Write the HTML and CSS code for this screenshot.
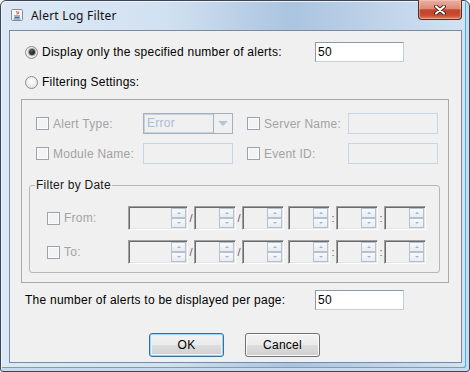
FILE: index.html
```html
<!DOCTYPE html>
<html lang="en">
<head>
<meta charset="UTF-8">
<title>Alert Log Filter</title>
<link rel="stylesheet" href="styles.css">
</head>
<body>
<div class="window">
    <!-- barra de titulo -->
    <div class="titlebar">
        <svg class="app-icon" width="12" height="12" viewBox="0 0 12 12">
            <rect x="0.5" y="0.5" width="11" height="11" rx="1" fill="#f4f4f4" stroke="#8c8c8c"/>
            <path d="M6 2 C5 3 7 4 6 5.5 M7.5 2.5 C7 3.5 8 4 7.3 5" stroke="#d2401f" stroke-width="1" fill="none"/>
            <path d="M3 7 H9 M3.5 8.5 H8.5 M2.5 10 H9.5" stroke="#3d6aa6" stroke-width="1" fill="none"/>
        </svg>
        <span class="title">Alert Log Filter</span>
        <div class="close-btn">
            <svg width="12" height="10" viewBox="0 0 12 10">
                <path d="M2 1.5 L10 8.5 M10 1.5 L2 8.5" stroke="#4b2019" stroke-width="4" stroke-linecap="round"/>
                <path d="M2 1.5 L10 8.5 M10 1.5 L2 8.5" stroke="#ffffff" stroke-width="2.2" stroke-linecap="round"/>
            </svg>
        </div>
    </div>

    <div class="client">
        <div class="row row-count">
            <label class="choice"><span class="radio checked"></span>Display only the specified number of alerts:</label>
            <div class="textfield">50</div>
        </div>
        <div class="row row-filter">
            <label class="choice"><span class="radio"></span>Filtering Settings:</label>
        </div>

        <div class="filter-panel">
            <div class="filter-grid">
                <label class="choice disabled"><span class="check"></span>Alert Type:</label>
                <div class="combo">
                    <span class="combo-text">Error</span>
                    <span class="combo-arrow"></span>
                </div>
                <label class="choice disabled"><span class="check"></span>Server Name:</label>
                <div class="textfield off"></div>

                <label class="choice disabled"><span class="check"></span>Module Name:</label>
                <div class="textfield off"></div>
                <label class="choice disabled"><span class="check"></span>Event ID:</label>
                <div class="textfield off"></div>
            </div>

            <fieldset class="date-group">
                <legend>Filter by Date</legend>
                <div class="date-row">
                    <label class="choice disabled date-label"><span class="check"></span>From:</label>
                    <div class="spinner wide"><div class="spin-btns"><span class="spin-up"></span><span class="spin-down"></span></div></div>
                    <span class="sep">/</span>
                    <div class="spinner"><div class="spin-btns"><span class="spin-up"></span><span class="spin-down"></span></div></div>
                    <span class="sep">/</span>
                    <div class="spinner"><div class="spin-btns"><span class="spin-up"></span><span class="spin-down"></span></div></div>
                    <span class="sep blank"></span>
                    <div class="spinner"><div class="spin-btns"><span class="spin-up"></span><span class="spin-down"></span></div></div>
                    <span class="sep">:</span>
                    <div class="spinner"><div class="spin-btns"><span class="spin-up"></span><span class="spin-down"></span></div></div>
                    <span class="sep">:</span>
                    <div class="spinner"><div class="spin-btns"><span class="spin-up"></span><span class="spin-down"></span></div></div>
                </div>
                <div class="date-row">
                    <label class="choice disabled date-label"><span class="check"></span>To:</label>
                    <div class="spinner wide"><div class="spin-btns"><span class="spin-up"></span><span class="spin-down"></span></div></div>
                    <span class="sep">/</span>
                    <div class="spinner"><div class="spin-btns"><span class="spin-up"></span><span class="spin-down"></span></div></div>
                    <span class="sep">/</span>
                    <div class="spinner"><div class="spin-btns"><span class="spin-up"></span><span class="spin-down"></span></div></div>
                    <span class="sep blank"></span>
                    <div class="spinner"><div class="spin-btns"><span class="spin-up"></span><span class="spin-down"></span></div></div>
                    <span class="sep">:</span>
                    <div class="spinner"><div class="spin-btns"><span class="spin-up"></span><span class="spin-down"></span></div></div>
                    <span class="sep">:</span>
                    <div class="spinner"><div class="spin-btns"><span class="spin-up"></span><span class="spin-down"></span></div></div>
                </div>
            </fieldset>
        </div>

        <div class="row row-page">
            <span class="page-label">The number of alerts to be displayed per page:</span>
            <div class="textfield">50</div>
        </div>

        <div class="buttons">
            <button class="btn default">OK</button>
            <button class="btn">Cancel</button>
        </div>
    </div>
</div>
</body>
</html>
```

FILE: styles.css
```css
* {
    box-sizing: border-box;
}

html, body {
    margin: 0;
    padding: 0;
}

body {
    width: 470px;
    height: 372px;
    overflow: hidden;
    background: #fff;
    font-family: "Liberation Sans", Arial, sans-serif;
    font-size: 12px;
    color: #000;
}

/* Marco de la ventana */
.window {
    width: 470px;
    height: 372px;
    border: 1px solid #3a4658;
    border-radius: 6px 6px 3px 3px;
    padding: 0 7px 8px 8px;
    background: linear-gradient(90deg, #dce8f5 0%, #d2e1f1 35%, #abc4df 62%, #c3d6eb 85%, #d4e3f2 100%);
    box-shadow: inset 1px 1px 0 #eef4fb, inset -3px -3px 0 #c8daed, inset -4px -4px 0 #38b7e7;
    display: flex;
    flex-direction: column;
}

.titlebar {
    height: 29px;
    display: flex;
    align-items: flex-start;
    padding-left: 2px;
}

.app-icon {
    margin-top: 8px;
}

.title {
    margin-left: 8px;
    margin-top: 7px;
    font-family: "Noto Sans", "Open Sans", sans-serif;
    font-size: 12px;
    line-height: 16px;
    letter-spacing: 0.2px;
    color: #111;
}

.close-btn {
    margin-left: auto;
    margin-top: -1px;
    width: 44px;
    height: 20px;
    border: 1px solid #5b2a22;
    border-top: none;
    border-radius: 0 0 4px 4px;
    background: linear-gradient(#eab0a2 0%, #dd8c78 45%, #c2452c 52%, #c84a2f 80%, #e0835c 100%);
    box-shadow: inset 0 0 0 1px rgba(255, 210, 200, 0.45);
    display: flex;
    align-items: center;
    justify-content: center;
}

/* Area de contenido */
.client {
    flex: 1;
    border: 1px solid #7c8a9b;
    background: #f0f0f0;
    padding-top: 11px;
    letter-spacing: 0.25px;
}

.row {
    display: flex;
    align-items: center;
    height: 20px;
    padding-left: 15px;
}

.row-count {
    margin-bottom: 10px;
}

.row-count .choice {
    width: 290px;
}

.choice {
    display: flex;
    align-items: center;
    gap: 4px;
    white-space: nowrap;
}

.disabled {
    color: #a3a3a3;
}

.radio {
    width: 13px;
    height: 13px;
    border-radius: 50%;
    border: 1px solid #8a8c8e;
    background: radial-gradient(circle at 50% 40%, #ffffff 0%, #eeeeee 50%, #d6d8da 100%);
    display: flex;
    align-items: center;
    justify-content: center;
}

.radio.checked::after {
    content: "";
    width: 6px;
    height: 6px;
    border-radius: 50%;
    background: radial-gradient(circle at 40% 35%, #5a5a5a 0%, #1b1b1b 70%);
    box-shadow: 0 0 0 1px #9aa5b0;
}

.check {
    width: 13px;
    height: 13px;
    border: 1px solid #9aa4ae;
    background: #f3f3f3;
    box-shadow: inset 0 0 0 1px #fafafa;
}

.textfield {
    width: 89px;
    height: 20px;
    background: #fff;
    border: 1px solid;
    border-color: #8d99a7 #c3ceda #c3ceda #8d99a7;
    padding-left: 2px;
    line-height: 18px;
}

.textfield.off {
    width: 90px;
    height: 21px;
    background: #f0f0f0;
    border-color: #c6d6e8;
}

/* Panel de filtros */
.filter-panel {
    margin: 7px 0 0 11px;
    width: 428px;
    height: 184px;
    border: 1px solid #a9a9a9;
    padding: 13px 0 0 14px;
}

.filter-grid {
    display: grid;
    grid-template-columns: 107px 104px 101px 90px;
    grid-auto-rows: 21px;
    row-gap: 9px;
    align-items: center;
}

.combo {
    width: 90px;
    height: 21px;
    border: 1px solid #a7afb8;
    display: flex;
    background: #f0f0f0;
}

.combo-text {
    flex: 1;
    border: 1px solid #c4d3e3;
    border-right: none;
    color: #a8bed5;
    padding-left: 2px;
    line-height: 17px;
}

.combo-arrow {
    width: 19px;
    border-left: 1px solid #a7afb8;
    display: flex;
    align-items: center;
    justify-content: center;
}

.combo-arrow::after {
    content: "";
    border-left: 5px solid transparent;
    border-right: 5px solid transparent;
    border-top: 5px solid #b1c5da;
}

.date-group {
    margin: 14px 0 0 -7px;
    padding: 14px 0 0 0;
    width: 411px;
    height: 95px;
    border: 1px solid #b7b7b7;
    border-radius: 3px;
}

.date-group legend {
    margin-left: 5px;
    padding: 0 1px;
    line-height: 14px;
    color: #1a1a1a;
}

.date-row {
    display: flex;
    align-items: center;
    height: 24px;
    padding-left: 17px;
}

.date-row + .date-row {
    margin-top: 10px;
}

.date-label {
    width: 81px;
}

.spinner {
    width: 42px;
    height: 24px;
    border: 1px solid;
    border-color: #a0a0a0 #ffffff #ffffff #a0a0a0;
    box-shadow: inset 1px 1px 0 #6b6b6b, inset -1px -1px 0 #e3e3e3;
    background: #f0f0f0;
    display: flex;
    justify-content: flex-end;
    padding: 1px 1px 1px 0;
}

.spinner.wide {
    width: 60px;
}

.spin-btns {
    width: 15px;
    display: flex;
    flex-direction: column;
}

.spin-up,
.spin-down {
    flex: 1;
    border: 1px solid #b4c1ce;
    background: linear-gradient(#f7f9fb, #e8edf2);
    display: flex;
    align-items: center;
    justify-content: center;
}

.spin-up::after {
    content: "";
    border-left: 2px solid transparent;
    border-right: 2px solid transparent;
    border-bottom: 2px solid #aab4be;
}

.spin-down::after {
    content: "";
    border-left: 2px solid transparent;
    border-right: 2px solid transparent;
    border-top: 2px solid #aab4be;
}

.sep {
    width: 6px;
    text-align: center;
    color: #5f5a70;
    font-size: 11px;
    letter-spacing: 0;
}

.sep.blank {
    width: 4px;
}

/* Fila inferior */
.row-page {
    margin-top: 7px;
}

.page-label {
    width: 290px;
    white-space: nowrap;
}

.buttons {
    display: flex;
    justify-content: center;
    gap: 21px;
    margin-top: 23px;
    padding-right: 2px;
}

.btn {
    width: 75px;
    height: 24px;
    font-family: "Liberation Sans", Arial, sans-serif;
    font-size: 12px;
    letter-spacing: 0.25px;
    color: #000;
    border: 1px solid #707070;
    border-radius: 3px;
    background: linear-gradient(#f2f2f2 0%, #ebebeb 50%, #dddddd 51%, #cfcfcf 100%);
    box-shadow: inset 0 0 0 1px #fbfbfb;
    padding: 0;
}

.btn.default {
    border-color: #3c6f98;
    box-shadow: inset 0 0 0 1px #9bd3f3, inset 0 0 0 2px #e6f4fc;
}
```
